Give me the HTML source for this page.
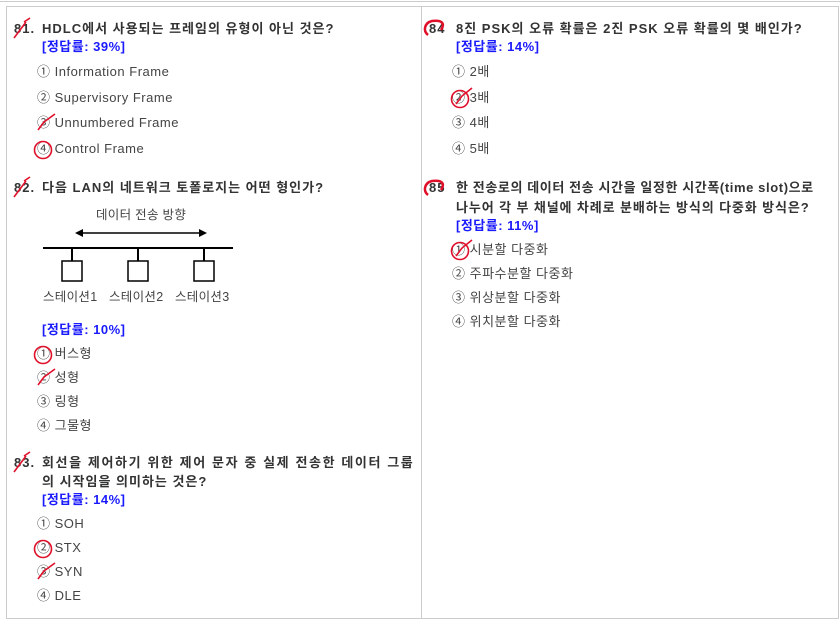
<!DOCTYPE html>
<html><head><meta charset="utf-8"><style>
body{margin:0;width:840px;height:624px;background:#fff;position:relative;overflow:hidden;font-family:"Liberation Sans","Noto Sans CJK KR",sans-serif;}
.a{position:absolute;white-space:nowrap;line-height:16px;}
.q{font-weight:bold;font-size:13px;color:#333;letter-spacing:1px;}
.r{font-weight:bold;font-size:13px;color:#1a1aff;letter-spacing:0.5px;}
.o{font-size:13px;color:#444;letter-spacing:0.5px;}
.c{font-size:12.5px;color:#444;letter-spacing:0.3px;}
svg{position:absolute;left:0;top:0;}
</style></head><body>
<div style="position:absolute;left:0;top:1px;width:840px;border-top:1px solid #ccc"></div>
<div style="position:absolute;left:6px;top:6px;width:831px;height:611px;border:1px solid #ccc"></div>
<div style="position:absolute;left:421px;top:6px;height:612px;border-left:1px solid #ccc"></div>

<!-- Q81 -->
<div class="a q" style="left:14px;top:21px">81.</div>
<div class="a q" style="left:42px;top:21px">HDLC에서 사용되는 프레임의 유형이 아닌 것은?</div>
<div class="a r" style="left:42px;top:39px">[정답률: 39%]</div>
<div class="a o" style="left:37px;top:64px">① Information Frame</div>
<div class="a o" style="left:37px;top:90px">② Supervisory Frame</div>
<div class="a o" style="left:37px;top:115px">③ Unnumbered Frame</div>
<div class="a o" style="left:37px;top:141px">④ Control Frame</div>

<!-- Q82 -->
<div class="a q" style="left:14px;top:180px">82.</div>
<div class="a q" style="left:42px;top:180px">다음 LAN의 네트워크 토폴로지는 어떤 형인가?</div>
<div class="a c" style="left:96px;top:207px">데이터 전송 방향</div>
<div class="a c" style="left:43px;top:289px">스테이션1</div>
<div class="a c" style="left:109px;top:289px">스테이션2</div>
<div class="a c" style="left:175px;top:289px">스테이션3</div>
<div class="a r" style="left:42px;top:322px">[정답률: 10%]</div>
<div class="a o" style="left:37px;top:346px">① 버스형</div>
<div class="a o" style="left:37px;top:370px">② 성형</div>
<div class="a o" style="left:37px;top:394px">③ 링형</div>
<div class="a o" style="left:37px;top:418px">④ 그물형</div>

<!-- Q83 -->
<div class="a q" style="left:14px;top:455px">83.</div>
<div class="a q" style="left:42px;top:455px;letter-spacing:1.6px">회선을 제어하기 위한 제어 문자 중 실제 전송한 데이터 그룹</div>
<div class="a q" style="left:42px;top:474px">의 시작임을 의미하는 것은?</div>
<div class="a r" style="left:42px;top:492px">[정답률: 14%]</div>
<div class="a o" style="left:37px;top:516px">① SOH</div>
<div class="a o" style="left:37px;top:540px">② STX</div>
<div class="a o" style="left:37px;top:564px">③ SYN</div>
<div class="a o" style="left:37px;top:588px">④ DLE</div>

<!-- Q84 -->
<div class="a q" style="left:429px;top:21px">84</div>
<div class="a q" style="left:456px;top:21px">8진 PSK의 오류 확률은 2진 PSK 오류 확률의 몇 배인가?</div>
<div class="a r" style="left:456px;top:39px">[정답률: 14%]</div>
<div class="a o" style="left:452px;top:64px">① 2배</div>
<div class="a o" style="left:452px;top:90px">② 3배</div>
<div class="a o" style="left:452px;top:115px">③ 4배</div>
<div class="a o" style="left:452px;top:141px">④ 5배</div>

<!-- Q85 -->
<div class="a q" style="left:429px;top:180px">85</div>
<div class="a q" style="left:456px;top:180px;letter-spacing:0.6px">한 전송로의 데이터 전송 시간을 일정한 시간폭(time slot)으로</div>
<div class="a q" style="left:456px;top:200px;letter-spacing:0.9px">나누어 각 부 채널에 차례로 분배하는 방식의 다중화 방식은?</div>
<div class="a r" style="left:456px;top:218px">[정답률: 11%]</div>
<div class="a o" style="left:452px;top:242px">① 시분할 다중화</div>
<div class="a o" style="left:452px;top:266px">② 주파수분할 다중화</div>
<div class="a o" style="left:452px;top:290px">③ 위상분할 다중화</div>
<div class="a o" style="left:452px;top:314px">④ 위치분할 다중화</div>

<svg width="840" height="624">
<g stroke="#000" stroke-width="2" fill="none">
<line x1="43" y1="248" x2="233" y2="248"/>
<line x1="72" y1="248" x2="72" y2="261"/><line x1="138" y1="248" x2="138" y2="261"/><line x1="204" y1="248" x2="204" y2="261"/>
<rect x="62" y="261" width="20" height="20" stroke-width="1.5"/><rect x="128" y="261" width="20" height="20" stroke-width="1.5"/><rect x="194" y="261" width="20" height="20" stroke-width="1.5"/>
<line x1="80" y1="233" x2="202" y2="233" stroke-width="1.5"/>
</g>
<polygon points="75,233 83,229 83,237" fill="#000"/><polygon points="207,233 199,229 199,237" fill="#000"/>
<g stroke="#e0102a" stroke-width="1.6" fill="none">
<path d="M14 38 L26 22 M24 22 L30 18"/><path d="M14 197 L26 181 M24 181 L30 177"/><path d="M14 472 L26 456 M24 456 L30 452"/>
<path d="M38 130 L44 122 L55 114"/><path d="M38 385 L44 377 L55 369"/><path d="M38 579 L44 571 L55 563"/>
<circle cx="43" cy="150" r="8.5"/><circle cx="43" cy="355" r="8.5"/><circle cx="43" cy="549" r="8.5"/>
<circle cx="460" cy="99" r="8.5"/><path d="M456 104 L462 96 L472 88"/>
<circle cx="460" cy="251" r="8.5"/><path d="M456 256 L462 248 L472 240"/>
<path d="M441 30 C446 22 440 20 432 21 C424 23 423 31 428 35" stroke-width="2.5"/>
<path d="M441 190 C446 182 440 180 432 181 C424 183 423 191 428 195" stroke-width="2.5"/>
</g>
</svg>
</body></html>
